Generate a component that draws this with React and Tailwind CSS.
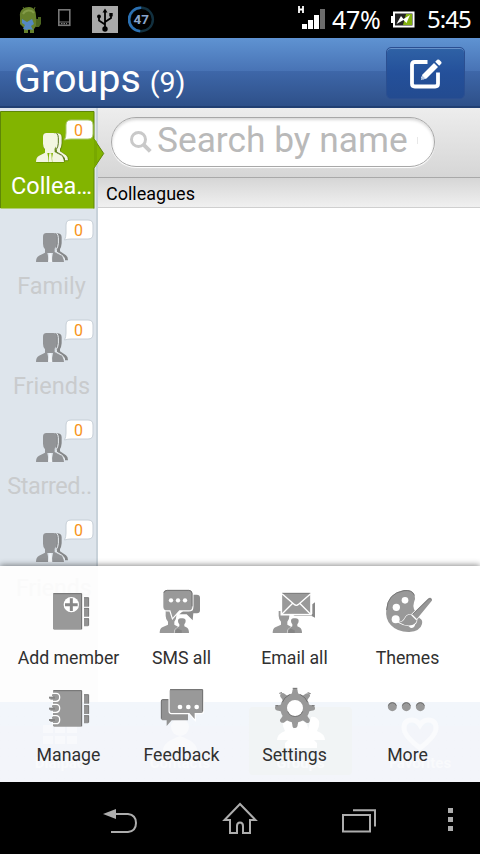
import clsx from 'clsx'

const GROUPS = [
  { name: 'Collea…', count: 0, active: true },
  { name: 'Family', count: 0 },
  { name: 'Friends', count: 0 },
  { name: 'Starred..', count: 0 },
  { name: '', count: 0 },
]

function StatusBar() {
  return (
    <div className="flex h-[38px] shrink-0 items-center bg-black text-white">
      <svg className="ml-[18px] h-[30px] w-6" viewBox="0 0 24 30">
        <path d="M5 3l2 3M17 3l-1 3" stroke="#566b25" strokeWidth="1" />
        <path d="M2 13C1 6 6 3 11 3s7 4 7 9l1 9-3 4v4h-4v-3h-2v3H6v-5l-4-4z" fill="#66802c" />
        <path d="M18 15h2v-2h3v7l-2 3h-3z" fill="#4d6620" />
        <path d="M5 10c2-4 8-5 11-1" stroke="#839a48" strokeWidth="2" fill="none" />
        <path d="M4 15l5 3 5-3 2 5-3 2 2 4-4-1-2 1-4-1 2-4-3-2z" fill="#5488c2" />
      </svg>
      <svg className="ml-[15px] h-[19px] w-3.5 -translate-y-0.5" viewBox="0 0 14 19">
        <rect x="1.8" y="1.8" width="11" height="15.5" fill="#000" stroke="#777" strokeWidth="1.6" />
        <path d="M2 14h10" stroke="#777" strokeWidth="1" />
        <path d="M4 15.7h6" stroke="#999" strokeWidth="1" strokeDasharray="1.5 1" />
      </svg>
      <svg className="ml-[21px] h-[27px] w-[26px]" viewBox="0 0 26 27">
        <rect width="26" height="27" fill="#a9a9a9" />
        <path d="M13 22V5M13 18.5l-6-4V10M13 16l6-4V8" fill="none" stroke="#000" strokeWidth="1.8" />
        <path d="M13 2.5l2.5 4h-5z" />
        <circle cx="13" cy="23" r="2.7" />
        <circle cx="7" cy="10.5" r="1.9" />
        <rect x="17.3" y="7" width="3.4" height="3.4" />
      </svg>
      <svg className="ml-2.5 h-[27px] w-[27px]" viewBox="0 0 27 27">
        <circle cx="13.2" cy="13.5" r="11.7" fill="none" stroke="#12303f" strokeWidth="2.4" />
        <path d="M13.2 1.8a11.7 11.7 0 1 0-1 23.4" fill="none" stroke="#2b70b2" strokeWidth="2.6" />
        <text x="13.2" y="18.3" textAnchor="middle" fontSize="13.500" fontWeight="700" fill="#8aa5cc" fontFamily="Roboto, sans-serif">47</text>
      </svg>
      <div className="flex-1" />
      <svg className="h-[26px] w-[30px]" viewBox="0 0 30 26">
        <path d="M2 0v7M6 0v7M2 3.500h4" stroke="#fff" strokeWidth="1.800" />
        <path d="M5 18h5v5H5zM11 14h5v9h-5zM17 9h5v14h-5z" fill="#fff" />
        <path d="M23 3h5v20h-5z" fill="#6b6b6b" />
      </svg>
      <span className="ml-[5px] w-[51px] whitespace-nowrap font-['Noto_Sans','Open_Sans',sans-serif] text-[25px] leading-[38px] font-normal tracking-[-0.3px]">47%</span>
      <svg className="ml-2 h-[17px] w-6" viewBox="0 0 24 17">
        <path d="M0 5h3v7H0z" fill="#fff" />
        <rect x="3" y="1.5" width="19.5" height="14" fill="#222" stroke="#fff" strokeWidth="2" />
        <path d="M15 3h6v11h-9z" fill="#82b010" />
        <path d="M5.500 13L10 5l2.500 3L19 4l-3.500 8-3-3z" fill="#fff" />
      </svg>
      <span className="mr-2 ml-3 w-[45px] whitespace-nowrap font-['Noto_Sans','Open_Sans',sans-serif] text-[24px] leading-[38px] font-normal tracking-[-1px]">5:45</span>
    </div>
  )
}

function Header() {
  return (
    <header className="flex h-[70px] shrink-0 items-start justify-between border-b-2 border-[#213f72] bg-[linear-gradient(#5f93d2_0,#4873b5_33px,#3e67a9_33px,#2e5089_68px)] pr-[15px] pl-3.5 text-white">
      <h1 className="pt-[18px] text-[39.500px] leading-[46px]">
        Groups<span className="ml-[9px] text-[28.500px]">(9)</span>
      </h1>
      <button className="mt-[9px] flex h-[52px] w-[79px] items-center justify-center rounded-[5px] border border-[#2b4f91] bg-[linear-gradient(#2f62a6,#24509a_50%,#234b90)] shadow-[inset_0_1px_0_#6791c9]">
        <svg className="h-8 w-8 translate-y-px" viewBox="0 0 32 32" fill="none">
          <path d="M17.500 4H4.800Q2 4 2 6.800v19Q2 28.500 4.800 28.500h20.400Q28 28.500 28 25.800V14.500" stroke="#fff" strokeWidth="3.800" />
          <path d="M11 20l1.500-3.500L24 5l4 4-11.500 11.500-3.500 1z" fill="#fff" />
          <path d="M25.200 3.800l2-2q1-.8 2 0l2 2q.8 1 0 2l-2 2z" fill="#fff" />
          <path d="M12.300 17.500l3 3-4.500 1.800z" fill="#b5c8e5" />
        </svg>
      </button>
    </header>
  )
}

function PeopleIcon({ active }) {
  const fill = active ? '#f3f6e1' : '#929497'
  const edge = active ? '#f3f6e1' : '#eef2f6'
  return (
    <svg className="h-[33px] w-9" viewBox="102 63 108 99">
      <g className={active ? 'drop-shadow-[1px_1px_1px_#3c5800]' : ''}>
        <path d="M165 70q20-3 20 12v18q-1 12-5 17v7l18 12q6 4 6 15h-9q0-6-5-10l-22-15z" fill={active ? '#f3f6e1' : '#858789'} />
        <path d="M129 80q0-11 10-11h21q10 0 10 11v20q0 11-6 16v10l18 10q9 5 10 20h-84q0-15 9-19l18-9v-10q-6-6-6-17z" fill={fill} />
        <path d="M170 70q5 5 5 13v17q-1 12-6 18v8l16 9q8 5 9 15" fill="none" stroke={active ? '#57741b' : edge} strokeWidth="3" />
        <path d="M142 129h17q-4 14-2 27h-13q2-14-2-27z" fill={active ? '#82b400' : '#dee5ec'} />
        <path d="M148 130h6l2 26h-11z" fill={active ? '#f3f6e1' : '#f3f5f8'} />
      </g>
    </svg>
  )
}

function Badge({ count, active }) {
  return (
    <div className="absolute top-[9px] left-[64px] h-[22px] w-[30px]">
      <svg className="absolute inset-0 h-full w-full" viewBox="0 0 30 22">
        <path d="M7 1h17q5 0 5 5v9q0 5-5 5H7q-3 0-6.500 1Q2 18 2 14V6q0-5 5-5z" fill="#fff" stroke={active ? '#a8c66a' : '#c7cfd7'} strokeWidth="1" />
      </svg>
      <span className="relative block pr-px text-center text-[16px] leading-[23px] text-[#f79317]">{count}</span>
    </div>
  )
}

function GroupItem({ name, count, active }) {
  return (
    <div className="relative h-[100px] shrink-0">
      {active && (
        <svg className="absolute top-0 left-0 h-[100px] w-[106px]" viewBox="0 0 106 100">
          <path d="M.5 1.500H94V29l9.700 14.500L94 58v40.500H.5z" fill="#82b400" />
          <path d="M.5 98V1.500H94V29l9.700 14.500L94 58v40.500" fill="none" stroke="#5e8607" strokeWidth="1" />
          <path d="M94 29l3 3v22l-3 4z" fill="#78a800" />
        </svg>
      )}
      <div className="relative pt-[21px] pl-[34px]">
        <PeopleIcon active={active} />
      </div>
      <Badge count={count} active={active} />
      <div className={clsx('relative mt-2 pl-[7px] text-center text-[23.500px] leading-7 whitespace-nowrap', active ? 'pl-2 text-white' : 'text-[#c9cbcd]', name.endsWith('..') && 'pr-1 tracking-[-0.4px]')}>
        {name}
      </div>
    </div>
  )
}

function SearchBar() {
  return (
    <div className="flex h-[70px] items-start border-b border-[#a9a9a9] bg-linear-to-b from-[#ededed] to-[#d6d6d6] pt-[9px] pl-[13px]">
      <div className="flex h-[50px] w-[324px] items-center rounded-full border border-[#a8a8a8] bg-white pl-[17px] shadow-[inset_0_2px_3px_#d8d8d8,0_1px_1px_#fff]">
        <svg className="h-6 w-6 shrink-0" viewBox="0 0 24 24" fill="none" stroke="#c9c9c9">
          <circle cx="9.500" cy="9.500" r="7" strokeWidth="3" />
          <path d="M14.800 14.800l6.500 6.500" strokeWidth="4" />
        </svg>
        <div className="ml-1 pb-[5px] text-[35.300px] leading-[42px] whitespace-nowrap text-[#b9b9b9]">Search by name</div>
        <div className="mb-1 ml-[9px] h-[7px] w-px bg-[#e8e8e8]" />
      </div>
    </div>
  )
}

// icons for the options menu, all drawn at 3x
function AddMemberIcon() {
  return (
    <svg className="h-12 w-[49px]" viewBox="132 78 147 144">
      <rect x="159" y="100" width="87" height="109" rx="4" fill="#999" />
      <path d="M160 101h85v107" fill="none" stroke="#6f6f6f" strokeWidth="3" />
      <path d="M252 112h11q4 0 4 4v24h-15zM252 144h15v26h-15zM252 175h15v20q0 4-4 4h-11z" fill="#939393" />
      <path d="M252 113h14v26M252 145h14v24M252 176h14v20" stroke="#707070" strokeWidth="2" fill="none" />
      <circle cx="214" cy="134" r="23" fill="#fff" />
      <path d="M214 115v38M195 134h38" stroke="#888" strokeWidth="9" />
    </svg>
  )
}

function People({ x }) {
  return (
    <g transform={`translate(${x} 0)`}>
      <path d="M0 219q0-13 8-17l17-8v-9q-7-7-7-17v-15h32v15q0 10-6 17v9l14 8v17z" fill="#999" />
      <path d="M44 219q1-12 8-16l7-4v-6q-4-4-4-10 0-8 8-8h6q9 0 9 8 0 6-4 10v6l6 3q8 4 8 17z" fill="#959595" stroke="#fff" strokeWidth="3" paintOrder="stroke" />
      <path d="M46 219q1-10 8-13l12 5v8z" fill="#858585" />
    </g>
  )
}

function SmsIcon() {
  return (
    <svg className="h-12 w-[49px]" viewBox="471 78 147 144">
      <People x={479} />
      <path d="M578 104h12q10 0 10 9v38q0 9-9 9h-11l-2 21-18-18h-22l14-12h26z" fill="#8d8d8d" />
      <path d="M501 90h65q11 0 11 11v39q0 11-11 11h-28l-20 22-7-22h-10q-11 0-11-11v-39q0-11 11-11z" fill="#999" stroke="#fff" strokeWidth="7" paintOrder="stroke" />
      <path d="M492 98q2-7 10-7h64q8 0 10 8v40" fill="none" stroke="#707070" strokeWidth="3" />
      <g fill="#fff"><circle cx="513" cy="121" r="6.500" /><circle cx="534" cy="121" r="6.500" /><circle cx="555" cy="121" r="6.500" /></g>
    </svg>
  )
}

function EmailIcon() {
  return (
    <svg className="h-12 w-[49px]" viewBox="90 78 147 144">
      <People x={98} />
      <path d="M217 133l8-6v46l-10-5h-55l8-6h49z" fill="#888" />
      <rect x="124" y="98" width="89" height="66" fill="#999" stroke="#fff" strokeWidth="5" />
      <path d="M126 100h85" stroke="#707070" strokeWidth="3" />
      <path d="M126 101l36 32q7 6 14 0l36-32M126 162l32-32M211 162l-32-32" stroke="#fff" strokeWidth="4" fill="none" />
    </svg>
  )
}

function ThemesIcon() {
  return (
    <svg className="h-12 w-[49px]" viewBox="429 78 147 144">
      <path d="M493 90q25-2 31 16 3 10-2 21-4 13 0 21l17 27q10 5 7 17-5 21-38 24-35 1-55-20-18-18-14-49 6-49 54-57z" fill="#999" />
      <path d="M440 150q2-50 52-58 25-3 31 14" fill="none" stroke="#777" strokeWidth="3" />
      <g fill="#fff"><circle cx="495" cy="121" r="10" /><circle cx="469" cy="142" r="11" /><circle cx="467" cy="178" r="12" /><path d="M505 193l20-10q3 18-9 21-9 1-11-11z" /></g>
      <path d="M477 187q12 0 18-12 6-13 20-11l48-47q8-7 12-1 4 4-2 9l-43 53q1 12-13 17-19 5-40-8z" fill="#969696" stroke="#fff" strokeWidth="4" paintOrder="stroke" />
      <path d="M515 164l15 15" stroke="#fff" strokeWidth="4" />
      <path d="M518 163l47-45q5-4 8 0" stroke="#777" strokeWidth="2.500" fill="none" />
    </svg>
  )
}

function ManageIcon() {
  return (
    <svg className="h-12 w-[49px]" viewBox="132 39 147 144">
      <rect x="159" y="61" width="87" height="109" rx="4" fill="#999" />
      <path d="M160 62h85v107" fill="none" stroke="#6f6f6f" strokeWidth="3" />
      <path d="M252 73h11q4 0 4 4v24h-15zM252 106h15v26h-15zM252 136h15v20q0 4-4 4h-11z" fill="#939393" />
      <path d="M252 74h14v26M252 107h14v24M252 137h14v20" stroke="#707070" strokeWidth="2" fill="none" />
      {[82, 115, 149].map((y) => (
        <g key={y} fill="none">
          <path d={`M156 ${y - 12}h12q11 0 11 12t-11 12h-12`} stroke="#fff" strokeWidth="4" />
          <path d={`M156 ${y - 6}h11q6 0 6 6t-6 4h-16`} stroke="#999" strokeWidth="6" />
          <path d={`M147 ${y + 1}h18`} stroke="#848484" strokeWidth="6" />
        </g>
      ))}
    </svg>
  )
}

function FeedbackIcon() {
  return (
    <svg className="h-12 w-[49px]" viewBox="471 39 147 144">
      <path d="M488 88h76v63h-49l-15 17v-17h-9q-8 0-8-8V94q0-6 5-6z" fill="#929292" />
      <path d="M484 146V93q0-4 4-4h18" stroke="#707070" strokeWidth="3" fill="none" />
      <path d="M514 57h90q5 0 5 5v62q0 5-5 5h-20v18l-16-18h-54q-5 0-5-5V62q0-5 5-5z" fill="#999" stroke="#fff" strokeWidth="7" paintOrder="stroke" />
      <path d="M510 59h98v65" stroke="#707070" strokeWidth="3" fill="none" />
      <g fill="#fff"><circle cx="540" cy="111" r="7" /><circle cx="565" cy="111" r="7" /><circle cx="590" cy="111" r="7" /></g>
    </svg>
  )
}

function SettingsIcon() {
  const teeth = [0, 45, 90, 135, 180, 225, 270, 315]
  return (
    <svg className="h-12 w-[49px]" viewBox="90 39 147 144">
      <g fill="#999">
        {teeth.map((a) => (
          <path key={a} d="M154 78l3-14q0-9 8-10t8 10l3 14z" transform={`rotate(${a} 165 114)`} />
        ))}
      </g>
      <circle cx="165" cy="114" r="34" fill="#fff" stroke="#999" strokeWidth="20" />
      <path d="M127 97q6-16 22-23M181 74q16 7 22 23M158 55h14M106 107h9M215 107h9M118 70l8-2M203 68l9 3" fill="none" stroke="#707070" strokeWidth="3" />
      <path d="M143 124a24 24 0 0 0 45 0" fill="none" stroke="#777" strokeWidth="3" />
    </svg>
  )
}

function MoreIcon() {
  return (
    <svg className="h-12 w-[49px]" viewBox="429 39 147 144">
      {[457, 499, 541].map((x) => (
        <g key={x}>
          <circle cx={x} cy="110" r="13.500" fill="#999" />
          <path d={`M${x - 12} 107a12.500 12.500 0 0 1 24 0`} fill="none" stroke="#6d6d6d" strokeWidth="3" />
        </g>
      ))}
    </svg>
  )
}

const MENU = [
  { label: 'Add member', Icon: AddMemberIcon },
  { label: 'SMS all', Icon: SmsIcon },
  { label: 'Email all', Icon: EmailIcon },
  { label: 'Themes', Icon: ThemesIcon },
  { label: 'Manage', Icon: ManageIcon },
  { label: 'Feedback', Icon: FeedbackIcon },
  { label: 'Settings', Icon: SettingsIcon },
  { label: 'More', Icon: MoreIcon },
]

// tab bar that shows faintly through the translucent menu
function FadedTabs() {
  return (
    <div className="absolute inset-x-0 bottom-0 grid h-20 grid-cols-4 bg-linear-to-b from-[#f2f6fb] from-30% to-[#f3f5fa] to-30% text-center text-[15px] font-bold text-[#f9fafc]">
      <div className="flex flex-col items-center justify-end pb-2">
        <svg className="h-8 w-9" viewBox="0 0 36 32" fill="#f8f9fc">
          <path d="M1 5h10v8H1zM13 5h10v8H13zM25 5h10v8H25zM1 16h10v8H1zM13 16h10v8H13zM25 16h10v8H25z" />
        </svg>
        Dialpad
      </div>
      <div className="flex flex-col items-center justify-end pb-2">
        <svg className="h-9 w-9" viewBox="0 0 36 36" fill="#f9fafc">
          <circle cx="18" cy="11" r="9" />
          <path d="M1 34q0-8 17-14 17 6 17 14z" />
        </svg>
        Contacts
      </div>
      <div className="mt-[5px] mb-[7px] ml-[9px] flex w-[103px] flex-col items-center justify-end rounded bg-[#f1f4f5] pb-px">
        <svg className="h-9 w-12" viewBox="0 0 48 36" fill="#fff">
          <path d="M0 24q0-6 8-9Q5 9 6 5q3-5 8-4l3 13h14l3-13q5-1 8 4 1 4-2 10 8 3 8 9H37l3 3v5H8v-5l3-3z" />
          <circle cx="24" cy="12" r="7" />
        </svg>
        Groups
      </div>
      <div className="flex flex-col items-center justify-end pb-2">
        <svg className="h-9 w-10" viewBox="0 0 40 36" fill="none" stroke="#fafbfd" strokeWidth="5">
          <path d="M20 32Q4 20 4 12q0-8 8-8 5 0 8 5 3-5 8-5 8 0 8 8 0 8-16 20z" />
        </svg>
        Favorites
      </div>
    </div>
  )
}

function OptionsMenu() {
  return (
    <div className="relative h-[216px] shrink-0 bg-white shadow-[0_-1px_6px_rgba(0,0,0,0.45)]">
      <div className="absolute top-0 left-0 h-[136px] w-[98px] bg-[#fdfdfd] pt-1.5 pl-4 text-[23px] text-[#fafafa]">Friends</div>
      <FadedTabs />
      <div className="relative grid grid-cols-[repeat(4,113px)] grid-rows-[repeat(2,97px)] pt-5 pl-3">
        {MENU.map(({ label, Icon }) => (
          <div key={label} className="flex flex-col items-center">
            <Icon />
            <span className="mt-3 text-[17.700px] leading-6 text-[#303030]">{label}</span>
          </div>
        ))}
      </div>
    </div>
  )
}

function NavBar() {
  return (
    <nav className="flex h-[72px] shrink-0 items-center bg-black pl-[60px]">
      <div className="flex w-[120px] justify-center pt-1.5">
        <svg className="h-[26px] w-9" viewBox="0 0 36 26" fill="none">
          <path d="M12 6h14q8 1 8 9t-8 9H9" stroke="#adadad" strokeWidth="2" />
          <path d="M1 6l13-5v10z" fill="#adadad" />
        </svg>
      </div>
      <div className="flex w-[120px] justify-center">
        <svg className="h-8 w-9" viewBox="0 0 36 32" fill="none" stroke="#adadad" strokeWidth="2">
          <path d="M18 2L2.500 18H8v13h7v-7q0-3.500 3-3.500t3 3.500v7h7V18h5.500z" />
        </svg>
      </div>
      <div className="flex w-[120px] justify-center pt-1.5">
        <svg className="h-6 w-[34px]" viewBox="0 0 34 24" fill="none" stroke="#adadad" strokeWidth="2">
          <rect x="1" y="6" width="27" height="16.500" />
          <path d="M11 1.200h22V17.500" />
        </svg>
      </div>
      <div className="flex w-[61px] flex-col items-center gap-1 pt-0.5 pl-px">
        <div className="h-[5px] w-[5px] bg-[#adadad]" />
        <div className="h-[5px] w-[5px] bg-[#adadad]" />
        <div className="h-[5px] w-[5px] bg-[#adadad]" />
      </div>
    </nav>
  )
}

export default function App() {
  return (
    <div className="flex h-[854px] w-[480px] flex-col overflow-hidden bg-white font-[Roboto,sans-serif]">
      <StatusBar />
      <Header />
      <div className="flex h-[458px] shrink-0">
        <aside className="z-10 h-[458px] w-[98px] shrink-0">
          <div className="flex h-[458px] flex-col border-r-2 border-[#c8d2da] bg-[#dee5ec] pt-0.5">
            {GROUPS.map((group, i) => (
              <GroupItem key={i} {...group} />
            ))}
          </div>
        </aside>
        <main className="flex-1">
          <SearchBar />
          <div className="h-[30px] border-b border-[#cfcfcf] bg-linear-to-b from-[#d6d6d6] to-[#f0f0f0] pl-2 text-[18px] leading-[31px] text-black">Colleagues</div>
        </main>
      </div>
      <div className="z-20 shrink-0">
        <OptionsMenu />
      </div>
      <NavBar />
    </div>
  )
}
